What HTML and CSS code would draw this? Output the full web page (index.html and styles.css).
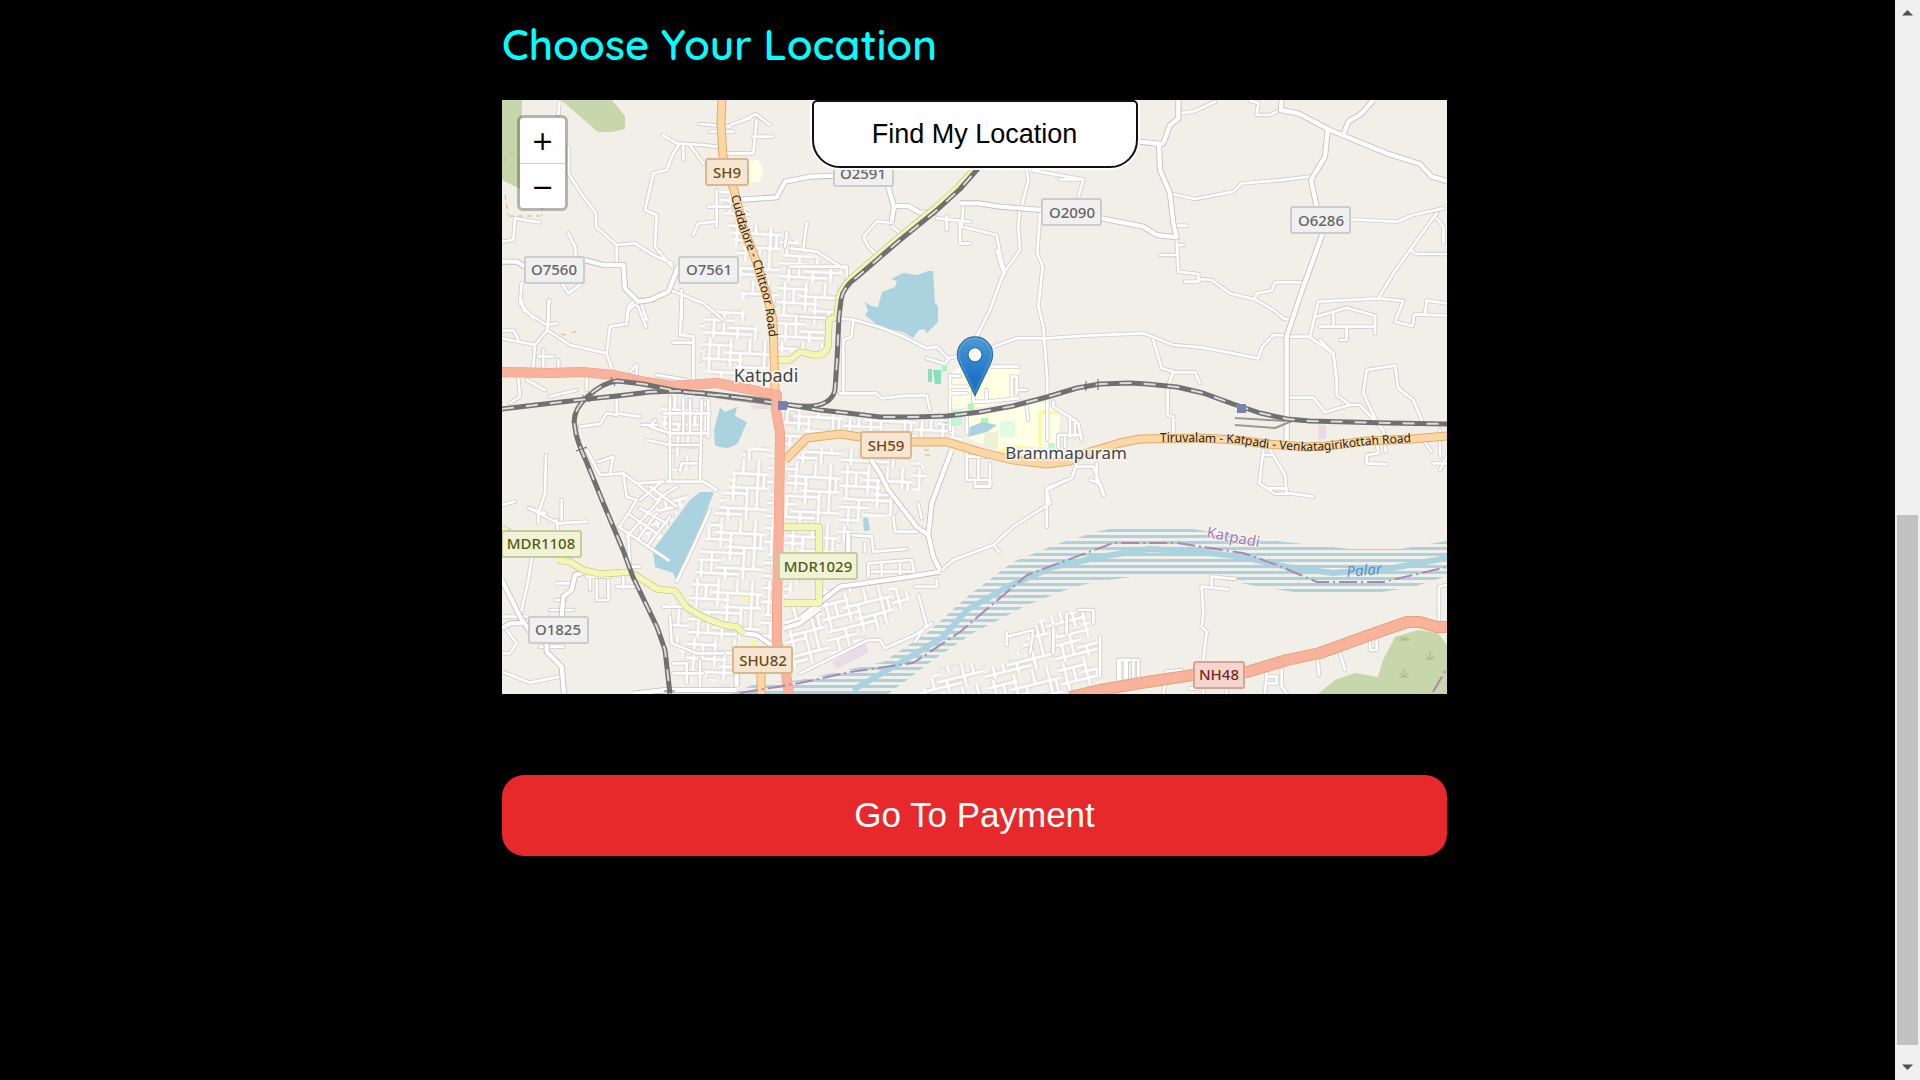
FILE: index.html
```html
<!DOCTYPE html>
<html lang="en">
<head>
<meta charset="utf-8">
<meta name="viewport" content="width=device-width, initial-scale=1">
<title>Choose Your Location</title>
<link rel="stylesheet" href="styles.css">
</head>
<body>
<main class="page">
  <section class="location">
    <h1 class="title">Choose Your Location</h1>
    <div class="map">
      <svg class="map-canvas" viewBox="502 100 945 594" role="img" aria-label="Map of Katpadi">
        <defs>
          <pattern id="river-lines" width="12" height="6" patternUnits="userSpaceOnUse">
            <rect width="12" height="3" y="1" fill="#aad3df"/>
          </pattern>
          <g id="block">
            <path d="M0 7H30M22 14H72M0 21H40M35 28H72M4 34H52M0 42H30M25 49H72M0 55H48M7 0V34M16 7V21M28 0V28M38 14V42M47 0V14M52 28V60M62 0V49M20 34V55M10 42V60M34 49V60M68 14V28"/>
          </g>
          <pattern id="town" width="72" height="60" patternUnits="userSpaceOnUse" patternTransform="rotate(3)">
            <use href="#block" class="block-edge"/><use href="#block" class="block-fill"/>
          </pattern>
          <pattern id="town-tilt" width="72" height="60" patternUnits="userSpaceOnUse" patternTransform="rotate(-14)">
            <use href="#block" class="block-edge"/><use href="#block" class="block-fill"/>
          </pattern>
          <g id="lanes" transform="scale(.333333)">
            <g transform="translate(1470 0)"><path d="M208 308L205 345M235 440V520L280 590 318 640V680L380 735 435 730 490 765 545 790M380 735V790M518 405L560 430 640 435 680 440M570 430L550 460 530 510 490 520 465 630 500 645 495 740 545 800M580 430V480M600 435L640 490M628 372L720 380M660 395H730M690 460H790L800 360M760 360L797 342 840 375M720 375L780 355M790 410H848M36 725L70 720 75 655 150 667M235 700L255 740 260 790M215 850L235 880 275 850M95 850L90 910 130 955M175 905V960M445 905L415 930 410 960M450 900L470 960M575 870V960M540 870L640 910 700 960M610 705L625 670 680 665M655 620H720M680 570V680M890 700L885 740M950 670L940 750M900 745L980 755 1060 805M900 800H1070V850M1160 765L1135 740 1120 710 1160 665 1205 668M1205 680L1240 705M1340 655L1440 665M1410 660V730H1440M1370 650V690"/></g>
            <g transform="translate(2880 240)"><path d="M660 100L700 95 765 65M870 62L895 70 890 105H930L962 90M200 270L205 300 185 380M220 272L370 298 355 350M300 298H370M180 385L175 440 180 510 130 580 90 690 50 770M240 400L232 520 248 560 235 680 250 740 262 900V1080M10 378L5 440 110 465 120 520 135 580M5 490H25M635 342L705 357 820 335 845 310 965 300 1050 290M1170 418L1310 425 1360 405 1450 385M1430 400L1350 510 1300 580 1255 655M1350 510L1370 522H1461M1430 415L1450 440V490M600 525H650M650 437H680M652 495H672M650 475L655 575 715 582V600M675 605H715M715 597L755 600 810 640 885 658 940 690 970 715 990 720M885 655L890 640 935 632 945 607H1028M985 770H1050L1075 665 1255 655 1330 663 1305 725 1358 738 1363 703 1461 707M1395 703L1400 662 1461 670M1070 710L1160 683 1245 707V760M1120 700V740M1080 740H1245M1160 745V780H1140M1050 772L1120 820 1130 900M100 800L170 775 260 775 380 767 550 760 640 795 730 803 895 835 905 803 940 765 980 767"/></g>
            <g transform="translate(3360 1020)"><path d="M100 0L125 85 160 95 143 140V225L160 230V280M160 97H225L240 130M650 120V165L690 195H720L790 270 797 335M650 120L640 40 600 0M508 173H580L615 217 690 195M770 245L730 160 740 90 825 77 835 145 880 180 905 240M770 300L775 340 740 345V370L800 373M430 330L418 430 465 462 510 460 580 470M450 330L495 405 500 460M440 445H500M430 345H460M910 300L935 335M960 270V350M940 370H981M960 390L981 350"/></g>
            <g transform="translate(1470 900)"><path d="M95 0L100 30 170 75 200 70M178 0L172 90 240 135 350 160M172 90L135 135 36 115M36 92H70L85 118M135 135L130 200M160 150V200M205 180V200M365 205L350 160 360 80 410 72 415 20 435 0H490M440 10L468 80M575 0L570 105 610 110V240M550 128H610M85 235L90 290 60 310M145 170H190M110 240L165 270M180 290L260 270M290 235V270M270 380L330 372 350 340 380 345M380 300V340L450 350M420 215L440 195V225M500 225L590 240M540 290V540M580 295V400M600 300V400M635 300L630 545M655 300V410M495 360L480 380 540 400H655M455 375H500M470 420L540 435H630M520 340H660M290 450L330 525 400 520 440 550 520 545M325 485L370 470 360 520M168 465L165 580 145 640M36 615L75 605M115 625L165 640M215 600V660M570 515L575 490H620M400 520L410 590 440 600M440 550L500 600 560 560M480 560L560 620M450 600L510 550M640 545L680 570M530 545H640"/></g>
            <g transform="translate(2400 750)"><path d="M0 200L155 208 240 232 300 255 380 295 410 290 445 325 468 320M380 325L435 342 445 325M160 210L155 260 130 270V430M120 430H230L245 445 320 437H380L390 480M590 0L612 75M450 375V540M450 378H480M450 410H500M450 430H500M520 455H560V420M520 455V420M575 350H655M500 500V550M560 455L655 445M635 440V380H650V430M655 420H680M680 470L685 510M760 455V470L800 495 835 520 845 570M810 500V560M825 510V560M775 555H845M775 555V590M795 555V590M830 640L815 685 740 715V830M830 650H880L910 735M890 640V690M500 600V690M570 640V710H525M500 690H570M505 620H585M535 620V690"/></g>
            <g transform="translate(1470 1500)"><path d="M390 80L440 0M410 110L510 0M385 80L535 180M420 45L500 100M450 25L530 70M445 115L500 40M475 135L540 50M415 110L420 200H450M125 175L115 240 90 350M200 250H250M300 215V270M290 230H360M320 240V300H355V240M380 260H440M400 230V265M36 350H110M50 390L80 430 60 460H36M36 515L120 548 210 530M150 440H220M175 350V380M195 300H225M180 330H250M120 25L205 70 290 65M200 60L205 110M145 40V70M520 320H600M540 350L545 430 620 460H700M550 490H590V550M550 520H640M630 480V570M560 245L610 140 660 30"/></g>
            <g transform="translate(2400 1440)"><path d="M280 110L285 155H350M150 165L215 170 220 215 320 207M195 190V215M355 345L380 435 345 485M395 430L345 465 255 505 240 480H205L0 580M425 270L460 240 580 195 640 140 750 70 740 30 800 0M580 195L600 218M525 0V18H570V0M355 70L365 115M870 0L900 10 912 45M205 290V250L335 240 345 290M215 275H335M245 245V290M300 245V290M345 320H410V300M620 460V495M620 470L700 450 690 520M800 400V460M835 390H880V430M760 440V520M955 600V540H990M975 540V600"/></g>
            <g transform="translate(3300 1500)"><path d="M335 260V230L405 237M305 260L385 268M305 260L310 340 305 380 320 395 310 480M1017 360V260L1041 255M653 475L657 525M720 460L735 510M545 510V560L560 580M500 520L495 580M810 425V450H830V425M505 530H530V550H505M200 530L190 580M200 515L245 510M60 540V480H80V540M85 480H115V540M100 480V530M0 410V530M270 565H310V580M380 560V580"/></g>
          </g>
          <g id="roads" transform="scale(.333333)">
            <path transform="translate(1470 0)" d="M740 600L860 592 885 545 960 530 1035 527M1195 560L1212 620 1205 665M1212 618H1255L1290 638H1340M36 785H80L105 800M283 780L340 795 400 795 405 865 445 905 480 900 535 875 565 800"/>
            <path transform="translate(2880 240)" d="M655 60V115L630 135 610 190 597 195 600 270 630 340 640 430 650 472 590 465 550 440 425 415M540 185L600 192M965 60L962 90 1015 100 1110 150 1280 220 1380 252 1415 290 1461 303M1150 165L1165 125 1205 100 1240 60M1103 150L1095 230 1053 300 1070 380M1088 460L1030 620 980 770V1080M0 370H55L120 380 245 390"/>
            <path transform="translate(2400 1440)" d="M195 -90L240 -20 265 30 350 140 385 165 400 230 420 270M455 -90L395 70 385 165M0 415L120 320 330 290 420 275M145 160V220"/>
            <path transform="translate(1470 1500)" d="M36 240L90 350 120 395M36 385L60 370H110M170 430V455L215 500 222 581M215 350L220 290 245 270 255 225 280 218M880 385L930 370 990 325M760 400L800 405 845 435M740 500V560M430 581L530 570H740"/>
          </g>
          <path id="rail-main" d="M502 409L553 403 587 399 617 396 650 392 677 391 710 394 743 398 777 403 820 410 847 413 880 417H913L947 416 980 412 1013 406 1047 397 1077 388 1100 384 1130 383 1147 384 1177 387 1203 393 1233 404 1260 413 1287 419 1310 421 1387 423 1447 424"/>
          <path id="rail-loop" d="M743 398L677 391 643 384 618 381Q603 382 587 397T575 427Q576 440 587 463L602 500 623 550 633 577 657 627 665 650 670 694"/>
          <path id="rail-north" d="M790 405Q830 411 835 390L837 360 839 317 841 300Q843 287 857 277L900 240 937 210 960 189 982 164"/>
          <g id="yellow-roads">
            <path d="M835 317L829 320 828 346Q826 355 815 355L800 352 790 360H777M502 528L520 540M558 560L570 562 583 570 600 574 630 572 643 580 657 589 675 591 687 608 703 617 723 625 737 627 744 634M783 527H819V603H783"/>
          </g>
          <g id="orange-roads">
            <path d="M722 100L721 123 723 157 735 193 743 227 757 263 768 300 773 320 775 392M761 665V694M785 460L807 438 840 434 860 437 913 442H947L980 452 1013 460 1047 464 1070 461 1083 454 1120 443 1140 439 1200 438 1237 440 1267 444 1307 447 1327 446 1367 441 1413 439 1447 436"/>
          </g>
          <path id="trunk" d="M502 372L550 373 583 372 613 375 640 381 672 386 717 383 737 387 777 395 776 410 780 433 779 520 777 600V643L785 667 789 694"/>
          <path id="highway" d="M1070 697L1100 690 1147 682 1193 675 1247 672 1287 660 1320 653 1367 636 1407 622H1420L1437 627H1447"/>
          <path id="text-chittoor" d="M731 196L739 227 753 263 764 300 771 350"/>
          <path id="text-venkata" d="M1160 442L1200 442 1237 443 1267 448 1307 451 1327 450 1367 445 1413 442 1440 440"/>
        </defs>

        <rect x="502" y="100" width="945" height="594" fill="#f2efe9"/>

        <g class="green">
          <path d="M502 100H522V190L502 180ZM561 100H612L625 116V129L612 132H598ZM1318 694L1335 680 1355 673 1378 677 1383 660 1395 637 1418 630 1438 633 1447 645V694Z"/>
        </g>
        <path class="scrub" d="M1399 640H1409M1404 640V636M1404 640L1400 637M1404 640L1408 637M1425 659H1435M1430 659V651M1430 659L1426 655M1430 659L1434 655M1399 677H1409M1404 677V669M1404 677L1400 673M1404 677L1408 673"/>
        <path class="campus" d="M960 367H1019V390L1017 397 985 407 950 408V374ZM968 417L1047 402 1060 417 1057 448 1020 446 1000 452 968 438ZM748 161L758 160 764 170 760 181 750 183Z"/>
        <path class="campus-edge" d="M1040 447V412L1058 413M1025 447H1012L1000 451M903 424V418M912 428H925M744 594V602M744 597L752 600M753 640V648"/>
        <path fill="#eef0d5" d="M985 433L998 431 998 450 983 446Z"/>
        <path fill="#88e0be" d="M928 369H932V382H928ZM933 370H941V384H935ZM939 422H947V427H939Z"/>
        <path fill="#aef5b8" d="M942 366H947V371H942ZM968 404H974V410H968ZM981 418H988V424H981Z"/>
        <path fill="#c0f6d5" d="M949 410H962V425L949 427ZM1048 443H1055V449H1048Z"/>
        <rect x="1000" y="421" width="15" height="16" rx="3" fill="#dffce2"/>
        <path class="lilac" d="M832 662L865 642 869 652 837 669ZM1318 425H1326V439H1318ZM750 405H776V409H755ZM784 412L795 416 793 425H785Z"/>
        <path class="water" d="M865 315L868 311 865 302 871 306 878 307 882 292 895 287 897 281 891 279 903 273 917 275 928 271H933L935 303 938 306V322L927 333 924 329 919 330 913 338 903 332 880 327ZM720 407L725 412 737 407 735 416 747 422 738 443Q727 452 715 445L714 430ZM700 492L714 492 703 520 693 547 677 582 673 573 655 567 653 550 690 500ZM968 437L970 427 982 422 997 425 987 432ZM863 518H868L870 530 864 531Z"/>

        <path fill="url(#river-lines)" d="M730 694L757 683 800 680 883 662 927 633 967 597 1013 562 1060 543 1100 531 1110 529H1193L1240 537 1313 545 1350 549H1400L1447 541V576L1413 587 1363 595H1313L1250 585 1200 575H1147L1100 581 1073 587 1027 605 973 633 933 660 888 694Z"/>
        <path class="river-core" d="M853 690L910 657 943 637 967 610 1007 587 1053 567 1100 557 1130 552 1150 549 1200 552 1243 557 1287 567 1333 573 1393 568 1447 558"/>

        <g class="dense">
          <path fill="url(#town)" d="M718 190L740 192 755 225 790 232 808 255 842 268 838 290 832 315 828 348 780 352 768 300 742 300 740 262ZM700 312L740 308 770 345 770 385 735 380 700 372ZM660 395L705 397 708 430 690 470 668 470ZM744 450L773 445 772 640 720 622 688 602 695 575 700 552 720 500Z"/>
          <path fill="url(#town)" d="M784 400L818 412 845 418 935 420 965 430 962 440 860 433 800 436 784 452ZM668 600L690 612 740 632 742 660 728 690 690 668 672 640Z"/>
          <path fill="url(#town)" d="M786 468L808 448 905 450 928 470 918 492 893 488 900 515 860 518 850 535 783 600Z"/>
          <path fill="url(#town-tilt)" d="M820 590L870 582 912 592 908 602 885 625 860 640 825 658 785 672V605ZM920 694L940 668 965 662 998 668 1020 650 1040 620 1060 612 1092 612 1088 632 1100 645 1098 690 1060 694ZM652 502L690 492 660 540 625 530Z"/>
        </g>

        <use href="#lanes" class="lane-edge"/>
        <use href="#lanes" class="lane-fill"/>
        <use href="#roads" class="road-edge"/>
        <use href="#roads" class="road-fill"/>

        <path class="track" d="M504 162Q506 154 514 153M505 195L508 215M509 216H540M542 205V216M561 334L570 336M572 333L576 331M924 450H930M925 455H930"/>

        <path class="yellow-strip-edge" d="M836 317L838 298Q841 285 855 274L898 237 935 207 957 187 976 166"/>
        <path class="yellow-strip" d="M836 317L838 298Q841 285 855 274L898 237 935 207 957 187 976 166"/>
        <use href="#yellow-roads" class="yellow-edge"/><use href="#yellow-roads" class="yellow-fill"/>
        <use href="#orange-roads" class="orange-edge"/><use href="#orange-roads" class="orange-fill"/>
        <use href="#trunk" class="trunk-edge"/><use href="#trunk" class="trunk-fill"/>
        <use href="#highway" class="highway-edge"/><use href="#highway" class="highway-fill"/>

        <path class="siding" d="M1235 418L1285 421M1235 425L1275 428 1292 421M700 391L776 400M715 397L776 405"/>
        <use href="#rail-main" class="rail"/><use href="#rail-loop" class="rail"/><use href="#rail-north" class="rail"/>
        <use href="#rail-main" class="rail-dash"/><use href="#rail-loop" class="rail-dash"/><use href="#rail-north" class="rail-dash"/>
        <path class="rail-bridge" d="M611 377L615 386M582 395L590 402M576 451L587 447M1086 381V391M1098 379V390M664 691H675"/>
        <path class="trunk-fill" d="M776 393V412"/>
        <path fill="#7981b0" d="M778 401H787V410H778ZM1237 404H1246V413H1237Z"/>

        <path class="boundary" d="M740 693L800 683 850 672 913 663 960 632 1027 575 1113 543H1177L1243 553 1277 565 1317 582H1383L1447 567M1433 692L1447 668"/>

        <g class="shield grey">
          <rect x="525" y="257" width="59" height="26" rx="2"/><text x="554" y="275">O7560</text>
          <rect x="679" y="257" width="59" height="26" rx="2"/><text x="709" y="275">O7561</text>
          <rect x="834" y="160" width="59" height="26" rx="2"/><text x="863" y="179">O2591</text>
          <rect x="1042" y="199" width="59" height="26" rx="2"/><text x="1072" y="218">O2090</text>
          <rect x="1291" y="207" width="59" height="26" rx="2"/><text x="1321" y="226">O6286</text>
          <rect x="529" y="617" width="59" height="26" rx="2"/><text x="558" y="635">O1825</text>
        </g>
        <g class="shield orange">
          <rect x="706" y="159" width="42" height="26" rx="2"/><text x="727" y="178">SH9</text>
          <rect x="861" y="432" width="50" height="26" rx="2"/><text x="886" y="451">SH59</text>
          <rect x="733" y="647" width="59" height="26" rx="2"/><text x="763" y="666">SHU82</text>
        </g>
        <g class="shield yellow">
          <rect x="502" y="531" width="79" height="26" rx="2"/><text x="541" y="549">MDR1108</text>
          <rect x="779" y="553" width="78" height="26" rx="2"/><text x="818" y="572">MDR1029</text>
        </g>
        <g class="shield red">
          <rect x="1194" y="662" width="50" height="26" rx="2"/><text x="1219" y="680">NH48</text>
        </g>

        <g class="street-name">
          <text><textPath href="#text-chittoor">Cuddalore - Chittoor Road</textPath></text>
          <text><textPath href="#text-venkata">Tiruvalam - Katpadi - Venkatagirikottah Road</textPath></text>
        </g>
        <text class="place katpadi" x="766" y="382">Katpadi</text>
        <text class="place" x="1066" y="459">Brammapuram</text>
        <text class="district" transform="translate(1206 537) rotate(11)">Katpadi</text>
        <text class="river-name" transform="translate(1347 577) rotate(-5)">Palar</text>
      </svg>

      <svg class="marker" viewBox="0 0 25 41" role="img" aria-label="Marker">
        <defs>
          <linearGradient id="pin" x1="0" y1="0" x2="0" y2="1">
            <stop offset="0" stop-color="#4a9bd6"/><stop offset=".7" stop-color="#1f73c4"/><stop offset="1" stop-color="#1f70bf"/>
          </linearGradient>
        </defs>
        <path fill="url(#pin)" stroke="#2e6c97" stroke-width=".7" d="M12.5 .6C5.9 .6 .6 6 .6 12.6c0 2.800 1.200 5.400 2.200 7.400L12.500 40.200 22.200 20c1-2 2.200-4.600 2.200-7.400C24.400 6 19.100 .6 12.500 .6Z"/>
        <path fill="none" stroke="#fff" stroke-opacity=".15" d="M12.500 1.700C6.500 1.700 1.700 6.600 1.700 12.600c0 2.500 1.100 5 2 6.900L12.500 37.900 21.300 19.500c.9-1.900 2-4.400 2-6.900C23.300 6.600 18.500 1.700 12.500 1.700Z"/>
        <circle cx="12.500" cy="12.600" r="4.700" fill="#fff" stroke="#2e6c97" stroke-width=".7"/>
      </svg>

      <div class="zoom-control">
        <button class="zoom-button" type="button" aria-label="Zoom in">+</button>
        <button class="zoom-button" type="button" aria-label="Zoom out">−</button>
      </div>
      <button class="find-button" type="button">Find My Location</button>
    </div>
    <button class="pay-button" type="button">Go To Payment</button>
  </section>
</main>
<div class="scrollbar" aria-hidden="true">
  <svg class="scroll-arrow" viewBox="0 0 25 25"><path d="M7 15.500L12.500 10 18 15.500Z"/></svg>
  <div class="scroll-track"><div class="scroll-thumb"></div></div>
  <svg class="scroll-arrow" viewBox="0 0 25 25"><path d="M7 9.500L12.500 15 18 9.500Z"/></svg>
</div>
</body>
</html>
```
FILE: styles.css
```css
* {
  box-sizing: border-box;
}

body {
  margin: 0;
  min-height: 100vh;
  display: flex;
  background: #000;
  font-family: "Liberation Sans", Arial, sans-serif;
}

button {
  font-family: inherit;
  cursor: pointer;
}

.page {
  flex: 1;
  display: grid;
  grid-template-columns: 502fr 945fr 448fr;
  align-items: start;
}

.location {
  grid-column: 2;
  display: flex;
  flex-direction: column;
}

.title {
  margin: 0;
  padding: 18px 0 28px;
  color: #0ff;
  font-family: Quicksand, Lato, sans-serif;
  font-size: 42px;
  font-weight: 600;
  line-height: 54px;
}

/* Map */

.map {
  position: relative;
  overflow: hidden;
  background: #ddd;
}

.map-canvas {
  display: block;
  width: 100%;
  height: auto;
  font-family: "Noto Sans", sans-serif;
}

.map-canvas path,
.map-canvas use {
  stroke-linejoin: round;
}

.block-edge,
.block-fill,
.lane-edge,
.lane-fill,
.road-edge,
.road-fill,
.yellow-edge,
.yellow-fill,
.orange-edge,
.orange-fill,
.trunk-edge,
.trunk-fill,
.highway-edge,
.highway-fill,
.yellow-strip,
.yellow-strip-edge,
.rail,
.rail-dash,
.rail-bridge,
.siding,
.boundary,
.track,
.scrub,
.campus-edge,
.river-core {
  fill: none;
}

.block-edge { stroke: #d3d1cf; stroke-width: 5; }
.block-fill { stroke: #fff; stroke-width: 3; }
.lane-edge { stroke: #cfcecd; stroke-width: 13; stroke-linecap: round; }
.lane-fill { stroke: #fff; stroke-width: 8; stroke-linecap: round; }
.road-edge { stroke: #bfbebd; stroke-width: 18; }
.road-fill { stroke: #fff; stroke-width: 13; }

.green { fill: #c8d7ab; }
.scrub { stroke: #a3b685; }
.campus { fill: #ffffe5; }
.campus-edge { stroke: #fbf99a; stroke-width: 3; }
.lilac { fill: #ebdbe8; }
.water { fill: #aad3df; }
.river-core { stroke: #aad3df; stroke-width: 6; }

.yellow-edge { stroke: #b4bb78; stroke-width: 7; }
.yellow-fill { stroke: #f3f7b5; stroke-width: 6; }
.yellow-strip-edge { stroke: #b4bb78; stroke-width: 5; }
.yellow-strip { stroke: #f3f7b5; stroke-width: 4; }
.orange-edge { stroke: #dcae6c; stroke-width: 9; }
.orange-fill { stroke: #fcd6a4; stroke-width: 7; }
.trunk-edge { stroke: #f09a83; stroke-width: 10; }
.trunk-fill { stroke: #f9b29c; stroke-width: 9; }
.highway-edge { stroke: #dba878; stroke-width: 12; }
.highway-fill { stroke: #f9b29c; stroke-width: 10; }
.track { stroke: #d9b27a; stroke-dasharray: 5 4; }

.rail { stroke: #707070; stroke-width: 5; }
.rail-dash { stroke: #dcdcdc; stroke-width: 2; stroke-dasharray: 12 12; }
.rail-bridge { stroke: #666; stroke-width: 1; }
.siding { stroke: #999; stroke-width: 2; }
.boundary { stroke: #a88ab0; stroke-width: 2; stroke-dasharray: 18 4 2 4; }

.shield text {
  font-size: 15px;
  font-weight: 500;
  text-anchor: middle;
}

.shield rect { stroke-width: 2; }
.grey rect { fill: #f0f0f0; stroke: #ccc; }
.grey text { fill: #666; }
.orange rect { fill: #f6e5d0; stroke: #dcb690; }
.orange text { fill: #6b4a1c; }
.yellow rect { fill: #f1f3d6; stroke: #c6ca9c; }
.yellow text { fill: #545d16; }
.red rect { fill: #f5d6ce; stroke: #dda193; }
.red text { fill: #78281c; }

.street-name {
  font-size: 12px;
  fill: #2b2315;
}

.place {
  font-size: 17px;
  fill: #444;
  stroke: #fff;
  stroke-opacity: .7;
  stroke-width: 3px;
  paint-order: stroke;
  text-anchor: middle;
}

.katpadi { font-size: 18px; }
.district { font-size: 15px; fill: #a77aab; stroke: #fff; stroke-width: 2px; stroke-opacity: .6; paint-order: stroke; }
.river-name { font-size: 15px; font-style: italic; fill: #5c91c9; }

.marker {
  position: absolute;
  left: 50%;
  bottom: 50%;
  width: 38px;
  height: 61px;
  transform: translateX(-50%);
}

.zoom-control {
  position: absolute;
  top: 15px;
  left: 15px;
  display: flex;
  flex-direction: column;
  border: 3px solid rgba(0, 0, 0, .25);
  border-radius: 6px;
  background: #fff;
  background-clip: padding-box;
}

.zoom-button {
  width: 45px;
  height: 45px;
  padding: 0;
  border: 0;
  background: none;
  color: #000;
  font-family: "DejaVu Sans", sans-serif;
  font-size: 27px;
  line-height: 45px;
}

.zoom-button + .zoom-button {
  border-top: 1px solid #ccc;
}

.find-button {
  position: absolute;
  top: 0;
  left: 50%;
  width: 326px;
  height: 68px;
  transform: translateX(-50%);
  border: 2px solid #101010;
  border-radius: 5px 5px 28px 28px;
  box-shadow: 0 0 0 2px #fff;
  background: #fff;
  color: #000;
  font-size: 27px;
}

.pay-button {
  margin-top: 81px;
  height: 81px;
  padding: 0 0 2px;
  border: 0;
  border-radius: 22px;
  background: #e8292b;
  color: #fff;
  font-size: 35px;
}

/* Scrollbar */

.scrollbar {
  width: 25px;
  display: flex;
  flex-direction: column;
  background: #f0f0f0;
}

.scroll-arrow {
  height: 25px;
  fill: #505050;
}

.scroll-track {
  flex: 1;
  display: flex;
  flex-direction: column;
  justify-content: flex-end;
  padding: 0 2px 10px;
}

.scroll-thumb {
  height: 52%;
  background: #c1c1c1;
}
```
